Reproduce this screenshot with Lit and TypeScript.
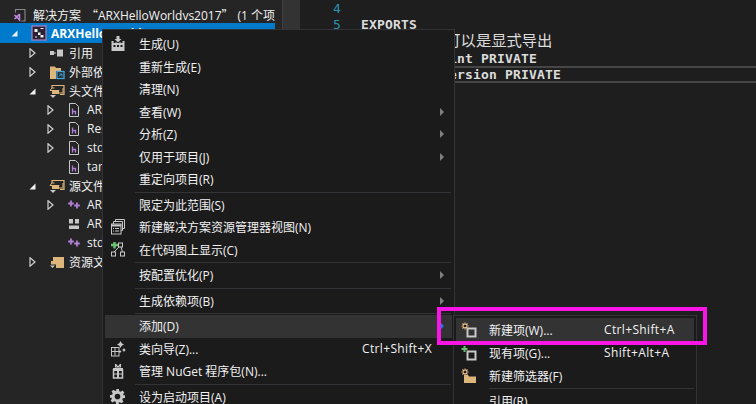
import { LitElement, html, css, svg } from "lit";
import { customElement } from "lit/decorators.js";

const G = "#c8c8c8";
const TAN = "#dcb67a";
const PUR = "#b180d7";
const ic = (body: unknown, w = 16, h = 16) => html`<svg width=${w} height=${h} viewBox="0 0 16 16">${body}</svg>`;
const star = svg`<path d="M4 0.500v7M0.500 4h7M1.500 1.500l5 5M6.500 1.500l-5 5" stroke="#f4c48a" stroke-width="1.100"/><circle cx="4" cy="4" r="1.300" fill="#1b1b1c"/>`;
const square = svg`<rect x="6.500" y="6.500" width="8" height="8" fill="none" stroke="${G}" stroke-width="2"/>`;
const plus = svg`<path d="M3.500 1v6M.5 4h6" stroke="#6cc070" stroke-width="2"/>`;

const icons: Record<string, unknown> = {
  build: ic(svg`<path d="M6.500 0h3v3h2l-3.500 3.500L4.500 3h2z" fill="${G}"/><path d="M1.500 5h2v2h2V6h1v1h3V6h1v1h2V5h2v10h-13z" fill="${G}"/><path d="M3.500 9h2v2h-2zM7 9h2v2H7zM10.500 9h2v2h-2z" fill="#1b1b1c"/>`),
  view: ic(svg`<path d="M5.500 3V.5h9v9H13" fill="none" stroke="${G}"/><path d="M3.500 5V2.500h9v9H10" fill="none" stroke="${G}"/><rect x="1.500" y="5" width="9.500" height="10" fill="#1b1b1c" stroke="${G}"/><path d="M1.500 6.500h9.500" stroke="${G}" stroke-width="2"/><path d="M3 9.500h1M5 9.500h4M3 12h1M5 12h4" stroke="${G}"/>`),
  map: ic(svg`<path d="M4.500 -.5v7M1 3h7" stroke="#6cc070" stroke-width="2.400"/><rect x="8.500" y="1" width="4" height="4" fill="none" stroke="${G}"/><rect x="1.500" y="10" width="4" height="4" fill="none" stroke="${G}"/><rect x="10.500" y="10" width="4" height="4" fill="none" stroke="${G}"/><path d="M9 5l-5 5M11 5l1.500 5" stroke="${G}"/>`),
  wizard: ic(svg`<rect x="1.500" y="6.500" width="7.500" height="8.500" fill="none" stroke="${G}"/><path d="M1.500 10.500h7.500M5 6.500v8" stroke="${G}"/><path d="M10.500 0l1.200 2.300 2.300 1.200-2.300 1.200-1.200 2.300-1.200-2.300L7 3.500l2.300-1.200zM14 7l.8 1.200L15.800 9l-1 .8L14 11l-.8-1.200L12 9l1.200-.8zM10 9l.6 1 1 .6-1 .6-.6 1-.6-1-1-.6 1-.6z" fill="${G}"/>`),
  nuget: ic(svg`<path d="M3.500 7h9v8h-9z" fill="none" stroke="${G}" stroke-width="1.500"/><path d="M3 5h10v3H3zM7 5h2v10H7zM3 10.500h10v1H3z" fill="${G}"/><path d="M5.500 1l2.500 3 2.500-3M5.500 1v3h5V1" fill="none" stroke="${G}" stroke-width="1.100"/>`),
  gear: html`<svg width="15" height="15" viewBox="0 0 16 16" class="gear"><path fill-rule="evenodd" d="M6.500 0h3l.4 2.300 1.500.6 1.900-1.300 2 2-1.300 1.900.6 1.500L16 6.500v3l-2.300.4-.6 1.500 1.300 1.900-2 2-1.900-1.300-1.500.6L9.500 16h-3l-.4-2.300-1.500-.6-1.900 1.300-2-2 1.300-1.900-.6-1.500L0 9.500v-3l2.300-.4.6-1.500L1.600 2.700l2-2 1.900 1.300 1.500-.6zM8 5a3 3 0 1 0 0 6 3 3 0 0 0 0-6z" fill="${G}"/></svg>`,
  newitem: ic(svg`${square}${star}`),
  existing: ic(svg`${square}${plus}`),
  newfilter: ic(svg`<path d="M3 7h4l1 1.500h7V15H3z" fill="${TAN}"/>${star}`),
};

const treeIcons: Record<string, unknown> = {
  sol: ic(svg`<path d="M3.500 5.500V2.500h9.500v11.500H9.500" fill="none" stroke="#8a8a8a" stroke-width="1.100"/><path d="M2.500 8l2 2-2 2M7.500 7v6L3.500 8.500M3.500 11.500l4-4.500" fill="none" stroke="#c586e0" stroke-width="1.500"/>`),
  proj: ic(svg`<rect x="1" y="1" width="14" height="14" fill="#2a2233" stroke="#a77fc0" stroke-width="1.300"/><path d="M3.500 4h3v3h-3zM7 7.500h2.500v2.500H7zM9.500 10h3v2.500h-3z" fill="#f0f0f0"/><path d="M9.500 3.500h3M4 12h2" stroke="#f0f0f0"/>`),
  ref: ic(svg`<rect x="1" y="6" width="4" height="4" fill="${G}"/><path d="M5 8h2" stroke="${G}"/><rect x="8" y="4.500" width="6" height="7" fill="${G}"/>`),
  ext: ic(svg`<path d="M1 4V2.500h5L7 4h5v3H7v8H1z" fill="${TAN}"/><rect x="8" y="7.500" width="7" height="7" fill="#252526" stroke="#3ea6e0" stroke-width="1.300"/><path d="M10 12.500l2.500-2.500M10.500 10h2.500v2.500" stroke="#3ea6e0" fill="none"/>`),
  filterO: ic(svg`<path d="M3 5V2.500h12v9H11" fill="none" stroke="${TAN}" stroke-width="1.200"/><path d="M5.500 5H3L1 7.500h9L8 10h6V5" fill="none" stroke="${TAN}" stroke-width="1"/><path d="M3 7h7v4H3z" fill="${TAN}"/><path d="M1 12h6l-3 3z" fill="${G}"/>`),
  filterF: ic(svg`<path d="M4 3h11v11H7v-3.500H2V7h2z" fill="${TAN}"/><path d="M1 11.500h5l-2.500 2.500z" fill="${G}"/>`),
  h: ic(svg`<path d="M2.500 1.500h6l3 3v10h-9z" fill="none" stroke="${G}"/><path d="M5.500 6.500v6M5.500 9.500h3v3" fill="none" stroke="${PUR}" stroke-width="1.300"/>`),
  cpp: ic(svg`<path d="M4 3.500v6M1.200 6.500h5.600" stroke="${PUR}" stroke-width="1.800"/><path d="M10 5.500v6M7.200 8.500h5.600" stroke="${PUR}" stroke-width="1.800"/>`),
  def: ic(svg`<path d="M2 3h4v4.500H2zM8 3h4v4.500H8zM2 9.500h10V13H2z" fill="${G}"/>`),
};

type Row = { text: unknown; icon: string; depth: number; exp?: "open" | "closed"; sel?: boolean };
const tree: Row[] = [
  { text: html`解决方案<span class="cq open">“</span>ARXHelloWorldvs2017<span class="cq close">”</span>(1 个项目)`, icon: "sol", depth: 0 },
  { text: "ARXHelloWorldvs2017", icon: "proj", depth: 1, exp: "open", sel: true },
  { text: "引用", icon: "ref", depth: 2, exp: "closed" },
  { text: "外部依赖项", icon: "ext", depth: 2, exp: "closed" },
  { text: "头文件", icon: "filterO", depth: 2, exp: "open" },
  { text: "ARXHelloWorld.h", icon: "h", depth: 3, exp: "closed" },
  { text: "Resource.h", icon: "h", depth: 3, exp: "closed" },
  { text: "stdafx.h", icon: "h", depth: 3, exp: "closed" },
  { text: "targetver.h", icon: "h", depth: 3 },
  { text: "源文件", icon: "filterO", depth: 2, exp: "open" },
  { text: "ARXHelloWorld.cpp", icon: "cpp", depth: 3, exp: "closed" },
  { text: "ARXHelloWorld.def", icon: "def", depth: 3 },
  { text: "stdafx.cpp", icon: "cpp", depth: 3 },
  { text: "资源文件", icon: "filterF", depth: 2, exp: "closed" },
];

type Item = { t?: string; icon?: string; key?: string; arrow?: boolean; hover?: boolean; sep?: boolean };
const main: Item[] = [
  { t: "生成(U)", icon: "build" }, { t: "重新生成(E)" }, { t: "清理(N)" },
  { t: "查看(W)", arrow: true }, { t: "分析(Z)", arrow: true }, { t: "仅用于项目(J)", arrow: true }, { t: "重定向项目(R)" },
  { sep: true },
  { t: "限定为此范围(S)" }, { t: "新建解决方案资源管理器视图(N)", icon: "view" }, { t: "在代码图上显示(C)", icon: "map" },
  { sep: true }, { t: "按配置优化(P)", arrow: true },
  { sep: true }, { t: "生成依赖项(B)", arrow: true },
  { sep: true }, { t: "添加(D)", arrow: true, hover: true },
  { t: "类向导(Z)...", icon: "wizard", key: "Ctrl+Shift+X" }, { t: "管理 NuGet 程序包(N)...", icon: "nuget" },
  { sep: true }, { t: "设为启动项目(A)", icon: "gear" },
];
const sub: Item[] = [
  { t: "新建项(W)...", icon: "newitem", key: "Ctrl+Shift+A", hover: true },
  { t: "现有项(G)...", icon: "existing", key: "Shift+Alt+A" },
  { t: "新建筛选器(F)", icon: "newfilter" },
  { sep: true }, { t: "引用(R)..." },
];

@customElement("app-root")
export class AppRoot extends LitElement {
  static styles = css`
    :host { display: block; width: 756px; height: 404px; overflow: hidden; position: relative; background: #1e1e1e;
      font-family: "Open Sans", "Noto Sans CJK SC", sans-serif; font-size: 12px; color: #f1f1f1; }
    .page { display: grid; grid-template-columns: 275px 7px 1px 17px 1fr; height: 404px; }
    .tree { background: #252526; padding-top: 4px; overflow: hidden; }
    .row { display: flex; align-items: center; height: 19px; white-space: nowrap; box-sizing: border-box; }
    .row.sel { background: #007acc; color: #fff; font-weight: 700; height: 20px; }
    .row.d0 { padding-left: 12px; padding-top: 3px; }
    .row.d1 { padding-left: 11px; }
    .row.d2 { padding-left: 29px; }
    .row.d3 { padding-left: 47px; }
    .row svg { flex: none; }
    .cq { font-family: "Noto Sans CJK SC", sans-serif; }
    .cq.open { margin-left: 5px; }
    .cq.close { margin-right: 4px; }
    .exp { width: 7px; height: 10px; flex: none; margin-right: 13px; display: block; }
    .ticon { display: flex; margin-right: 4px; }
    .d0 .ticon { margin-right: 5px; }
    .noexp { width: 20px; flex: none; }
    .gutter { background: #252526; }
    .rule { background: #3f3f42; }
    .margin { background: #333333; }
    .editor { display: grid; grid-template-columns: 61px 1fr; grid-auto-rows: 16.600px;
      font-family: "DejaVu Sans Mono", monospace; font-size: 13px; letter-spacing: 0.170px; font-weight: 700; color: #dcdcdc; white-space: pre; align-items: center; }
    .num { color: #2b91af; padding-left: 33px; font-weight: 400; }
    .cm { font-family: "Noto Sans CJK SC", sans-serif; font-weight: 400; font-size: 15.300px; letter-spacing: 0; color: #dcdcdc; padding-left: 12px; padding-bottom: 4px; }
    .hl { border-top: 2px solid #464646; border-bottom: 2px solid #464646; height: 16.600px; box-sizing: border-box; display: flex; align-items: center; }
    .menu { position: absolute; background: #1b1b1c; border: 1px solid #333337; box-sizing: border-box; white-space: nowrap; }
    .m1 { left: 102px; top: 29px; width: 353px; height: 400px; padding: 3px 2px; }
    .m2 { left: 453px; top: 315px; width: 244px; height: 110px; padding: 2px 1px; }
    .it { position: relative; display: grid; grid-template-columns: 34px 223px 1fr; align-items: center; height: 22.500px; }
    .m2 .it { height: 23.200px; grid-template-columns: 33px 115px 1fr; margin: 0 1px; }
    .it.hv { background: #333334; }
    .ico { display: flex; padding-left: 5px; }
    .key { letter-spacing: 0.350px; }
    .sep { height: 3px; display: flex; align-items: center; padding: 0 1px 0 30px; }
    .sep::after { content: ""; flex: 1; height: 1px; background: #333337; }
    .m2 .sep { height: 2px; padding-left: 34px; }
    .arr { position: absolute; left: 335px; top: 50%; margin-top: -4px; width: 0; height: 0; border-left: 4px solid #808080; border-top: 4px solid transparent; border-bottom: 4px solid transparent; }
    .arr.on { border-left-color: #0e82e8; }
    .mark { position: absolute; left: 437px; top: 307px; width: 270px; height: 38px; box-sizing: border-box; border: 4px solid #fb14e6; pointer-events: none; }
  `;

  private renderItem(i: Item) {
    if (i.sep) return html`<div class="sep"></div>`;
    return html`<div class="it ${i.hover ? "hv" : ""}">
      <span class="ico">${i.icon ? icons[i.icon] : ""}</span>
      <span>${i.t}</span>
      <span class="key">${i.key ?? ""}</span>
      ${i.arrow ? html`<span class="arr ${i.hover ? "on" : ""}"></span>` : ""}
    </div>`;
  }

  private expander(r: Row) {
    if (r.exp === "open")
      return html`<svg class="exp" viewBox="0 0 7 10"><path d="M0.500 8.500L6.500 2.500v6z" fill="#f0f0f0"/></svg>`;
    if (r.exp === "closed")
      return html`<svg class="exp" viewBox="0 0 7 10"><path d="M1 .8l5 4.200-5 4.200z" fill="none" stroke="#d0d0d0" stroke-width="1.200"/></svg>`;
    return html`<span class="noexp"></span>`;
  }

  render() {
    return html`
      <div class="page">
        <div class="tree">
          ${tree.map((r) => html`<div class="row d${r.depth} ${r.sel ? "sel" : ""}">
            ${r.depth === 0 ? "" : this.expander(r)}
            <span class="ticon">${treeIcons[r.icon]}</span>
            <span>${r.text}</span>
          </div>`)}
        </div>
        <div class="gutter"></div>
        <div class="rule"></div>
        <div class="margin"></div>
        <div class="editor">
          <span class="num">4</span><span></span>
          <span class="num">5</span><span>EXPORTS</span>
          <span class="num"></span><span class="cm">;  这里也还可以是显式导出</span>
          <span class="num"></span><span>acrxEntryPoint PRIVATE</span>
          <span class="num"></span><span class="hl">acrxGetApiVersion PRIVATE</span>
        </div>
      </div>
      <div class="menu m1">${main.map((i) => this.renderItem(i))}</div>
      <div class="menu m2">${sub.map((i) => this.renderItem(i))}</div>
      <div class="mark"></div>
    `;
  }
}
